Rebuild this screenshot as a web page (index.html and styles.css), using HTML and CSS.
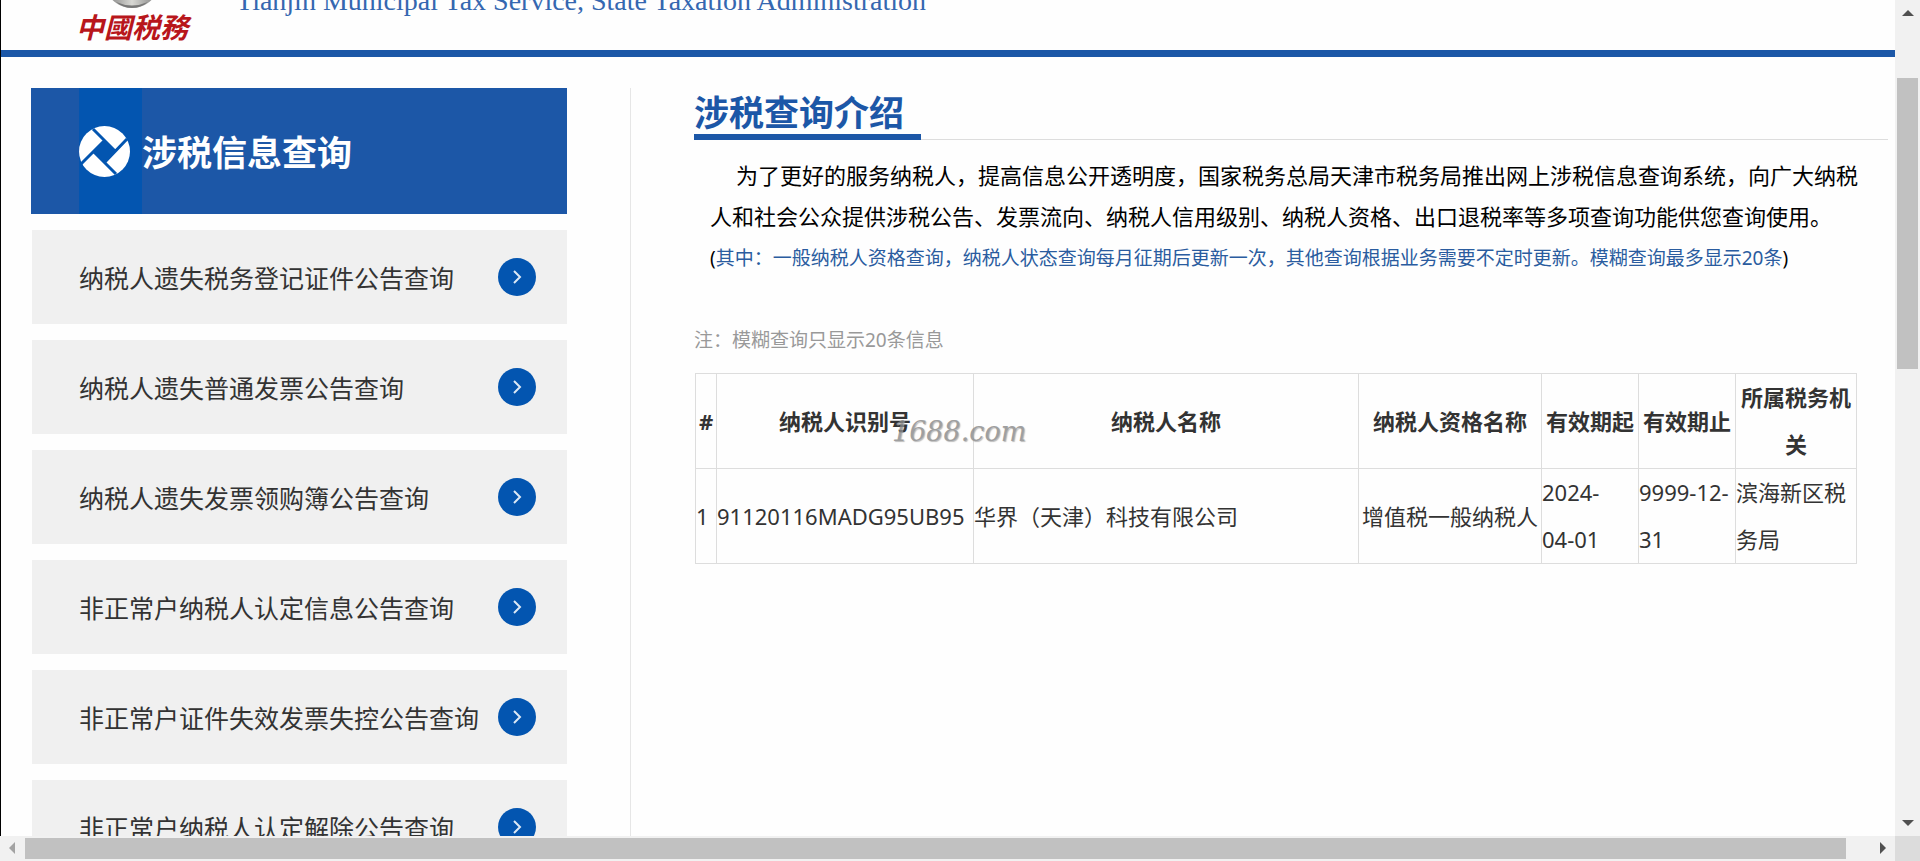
FILE: index.html
```html
<!DOCTYPE html>
<html lang="zh-CN">
<head>
<meta charset="utf-8">
<title>涉税信息查询</title>
<link rel="stylesheet" href="styles.css">
</head>
<body>
<div class="viewport">
  <div class="page">
    <header class="site-header">
      <div class="logo">
        <svg class="logo-emblem" viewBox="0 0 60 60" aria-hidden="true">
          <defs>
            <linearGradient id="metal" x1="0" y1="0" x2="1" y2="0">
              <stop offset="0" stop-color="#777"/>
              <stop offset="0.5" stop-color="#d8d8d4"/>
              <stop offset="1" stop-color="#777"/>
            </linearGradient>
          </defs>
          <path d="M2 30C2 12 14 2 30 2s28 10 28 28c0 16-12 29-28 29S2 46 2 30z" fill="url(#metal)"/>
          <path d="M14 53q16 7 32 0-7 6-16 6t-16-6z" fill="#777"/>
        </svg>
        <span class="logo-text">中國税務</span>
      </div>
      <p class="site-name">Tianjin Municipal Tax Service, State Taxation Administration</p>
    </header>
    <main class="main">
      <nav class="sidebar" aria-label="涉税信息查询">
        <h2 class="sidebar-title">
          <span class="sidebar-icon">
            <svg viewBox="0 0 51 51" aria-hidden="true">
              <circle cx="25.500" cy="25.500" r="25.500" fill="#fff"/>
              <path d="M25 14L37 25 26 37 14 26z" fill="#0355b0"/>
              <path d="M14 3L37 26M48 13L25 37M37 48L14 25M2 38L26 14" fill="none" stroke="#0355b0" stroke-width="3"/>
            </svg>
          </span>
          <span>涉税信息查询</span>
        </h2>
        <ul class="menu">
          <li><a class="menu-link" href="#"><span>纳税人遗失税务登记证件公告查询</span><svg class="go" viewBox="0 0 38 38" aria-hidden="true"><circle cx="19" cy="19" r="19"/><path d="M16 13l6 6-6 6"/></svg></a></li>
          <li><a class="menu-link" href="#"><span>纳税人遗失普通发票公告查询</span><svg class="go" viewBox="0 0 38 38" aria-hidden="true"><circle cx="19" cy="19" r="19"/><path d="M16 13l6 6-6 6"/></svg></a></li>
          <li><a class="menu-link" href="#"><span>纳税人遗失发票领购簿公告查询</span><svg class="go" viewBox="0 0 38 38" aria-hidden="true"><circle cx="19" cy="19" r="19"/><path d="M16 13l6 6-6 6"/></svg></a></li>
          <li><a class="menu-link" href="#"><span>非正常户纳税人认定信息公告查询</span><svg class="go" viewBox="0 0 38 38" aria-hidden="true"><circle cx="19" cy="19" r="19"/><path d="M16 13l6 6-6 6"/></svg></a></li>
          <li><a class="menu-link" href="#"><span>非正常户证件失效发票失控公告查询</span><svg class="go" viewBox="0 0 38 38" aria-hidden="true"><circle cx="19" cy="19" r="19"/><path d="M16 13l6 6-6 6"/></svg></a></li>
          <li><a class="menu-link" href="#"><span>非正常户纳税人认定解除公告查询</span><svg class="go" viewBox="0 0 38 38" aria-hidden="true"><circle cx="19" cy="19" r="19"/><path d="M16 13l6 6-6 6"/></svg></a></li>
        </ul>
      </nav>
      <section class="content">
        <div class="content-head"><h1 class="content-title">涉税查询介绍</h1></div>
        <div class="intro">
          <p class="intro-text">为了更好的服务纳税人，提高信息公开透明度，国家税务总局天津市税务局推出网上涉税信息查询系统，向广大纳税人和社会公众提供涉税公告、发票流向、纳税人信用级别、纳税人资格、出口退税率等多项查询功能供您查询使用。</p>
          <p class="intro-note">(<span>其中：一般纳税人资格查询，纳税人状态查询每月征期后更新一次，其他查询根据业务需要不定时更新。模糊查询最多显示20条</span>)</p>
        </div>
        <p class="hint">注：模糊查询只显示20条信息</p>
        <div class="result">
          <table class="result-table">
            <colgroup>
              <col class="col-index"><col class="col-id"><col class="col-name"><col class="col-type"><col class="col-date"><col class="col-date"><col class="col-office">
            </colgroup>
            <thead>
              <tr><th>#</th><th>纳税人识别号</th><th>纳税人名称</th><th>纳税人资格名称</th><th>有效期起</th><th>有效期止</th><th>所属税务机关</th></tr>
            </thead>
            <tbody>
              <tr><td>1</td><td>91120116MADG95UB95</td><td>华界（天津）科技有限公司</td><td class="center">增值税一般纳税人</td><td>2024-<br>04-01</td><td>9999-12-<br>31</td><td>滨海新区税务局</td></tr>
            </tbody>
          </table>
          <span class="watermark">1688.com</span>
        </div>
      </section>
    </main>
  </div>
  <div class="bar bar-v" aria-hidden="true">
    <svg class="arrow" viewBox="0 0 25 25"><path d="M7 16h12l-6-6z"/></svg>
    <div class="track-v"><div class="thumb-v"></div></div>
    <svg class="arrow" viewBox="0 0 25 25"><path d="M7 9h12l-6 6z"/></svg>
  </div>
  <div class="bar bar-h" aria-hidden="true">
    <svg class="arrow arrow-off" viewBox="0 0 25 25"><path d="M15 6v12l-6-6z"/></svg>
    <div class="track-h"><div class="thumb-h"></div></div>
    <svg class="arrow" viewBox="0 0 25 25"><path d="M10 6v12l6-6z"/></svg>
  </div>
  <div class="corner"></div>
</div>
</body>
</html>
```
FILE: styles.css
```css
* { box-sizing: border-box; }

body {
  margin: 0;
  background: #fefefe;
  color: #333;
  font-family: "Noto Sans", "Noto Sans CJK SC", sans-serif;
}

h1, h2, p, ul { margin: 0; padding: 0; }
ul { list-style: none; }

.viewport {
  display: grid;
  grid-template-columns: minmax(0, 1fr) 25px;
  grid-template-rows: minmax(0, 1fr) 25px;
  height: 100vh;
}

.page {
  overflow: hidden;
  border-left: 1px solid #000;
}

.site-header {
  display: flex;
  align-items: flex-end;
  gap: 48px;
  height: 57px;
  padding: 0 75px 7px;
  border-bottom: 7px solid #1c57a7;
}

.logo {
  display: flex;
  flex-direction: column;
  align-items: center;
}

.logo-emblem { width: 60px; height: 60px; }

.logo-text {
  color: #b8161b;
  font: italic 700 28px/34px "Noto Sans CJK TC", sans-serif;
}

.site-name {
  padding-bottom: 26px;
  color: #3567b0;
  font: 28px/32px "Liberation Serif", serif;
  white-space: nowrap;
}

.main {
  display: grid;
  grid-template-columns: minmax(0, 536fr) minmax(0, 1258fr);
  column-gap: 63px;
  padding: 31px 7px 0 30px;
}

.sidebar-title {
  display: flex;
  align-items: center;
  height: 126px;
  padding-left: 48px;
  background: #1c57a7;
  color: #fff;
  font: 700 35px/48px "Noto Sans CJK SC", sans-serif;
}

.sidebar-icon {
  display: flex;
  align-items: center;
  width: 63px;
  height: 100%;
  background: #0355b0;
}

.sidebar-icon svg { width: 51px; height: 51px; }

.menu {
  display: grid;
  gap: 16px;
  padding: 16px 0 16px 1px;
}

.menu-link {
  display: flex;
  align-items: center;
  justify-content: space-between;
  height: 94px;
  padding: 0 31px 0 47px;
  background: #f0f0f0;
  color: #333;
  font: 25px/36px "Noto Sans CJK SC", sans-serif;
  text-decoration: none;
  white-space: nowrap;
}

.go { width: 38px; height: 38px; }
.go circle { fill: #0355b0; }
.go path { fill: none; stroke: #dce8f5; stroke-width: 2; }

.content {
  padding-left: 63px;
  border-left: 1px solid #e6e6e6;
}

.content-head {
  display: flex;
  border-bottom: 1px solid #ddd;
}

.content-title {
  margin-bottom: -1px;
  padding-right: 17px;
  border-bottom: 6px solid #1c57a7;
  color: #1c57a7;
  font: 700 35px/46px "Noto Sans CJK SC", sans-serif;
}

.intro {
  padding: 15px 20px 0 16px;
  color: #000;
}

.intro-text {
  font-size: 22px;
  line-height: 41px;
  text-indent: 26px;
}

.intro-note {
  font-size: 19px;
  line-height: 43px;
}

.intro-note span { color: #2a5c9f; }

.hint {
  padding: 45px 0 18px;
  color: #999;
  font-size: 19px;
  line-height: 30px;
}

.result {
  position: relative;
  margin: 0 31px 0 1px;
}

.result-table {
  width: 100%;
  border-collapse: collapse;
  table-layout: fixed;
  font-size: 22px;
}

.result-table th, .result-table td {
  padding: 0;
  border: 1px solid #ddd;
  line-height: 47px;
  text-align: left;
}

.result-table th, .result-table .center { text-align: center; }

.col-index { width: 21px; }
.col-id { width: 257px; }
.col-type { width: 183px; }
.col-date { width: 97px; }
.col-office { width: 121px; }

.watermark {
  position: absolute;
  top: 43px;
  left: 197px;
  color: #888;
  font: italic 27px/32px "DejaVu Serif", serif;
  text-shadow: 1px 1px 1px #aaa;
  opacity: 0.8;
}

.bar { display: flex; background: #f1f1f1; }
.bar-v { flex-direction: column; }
.bar-h { grid-row: 2; }

.arrow { flex: none; width: 25px; height: 25px; fill: #505050; }
.arrow-off { fill: #a3a3a3; }

.track-v { flex: 1; padding: 0 2px; }
.track-h { flex: 1; padding: 2px 0; }

.thumb-v {
  height: 37%;
  margin-top: 53px;
  background: #c1c1c1;
}

.thumb-h {
  width: 98.700%;
  height: 100%;
  background: #c1c1c1;
}

.corner { background: #dcdcdc; }
```
